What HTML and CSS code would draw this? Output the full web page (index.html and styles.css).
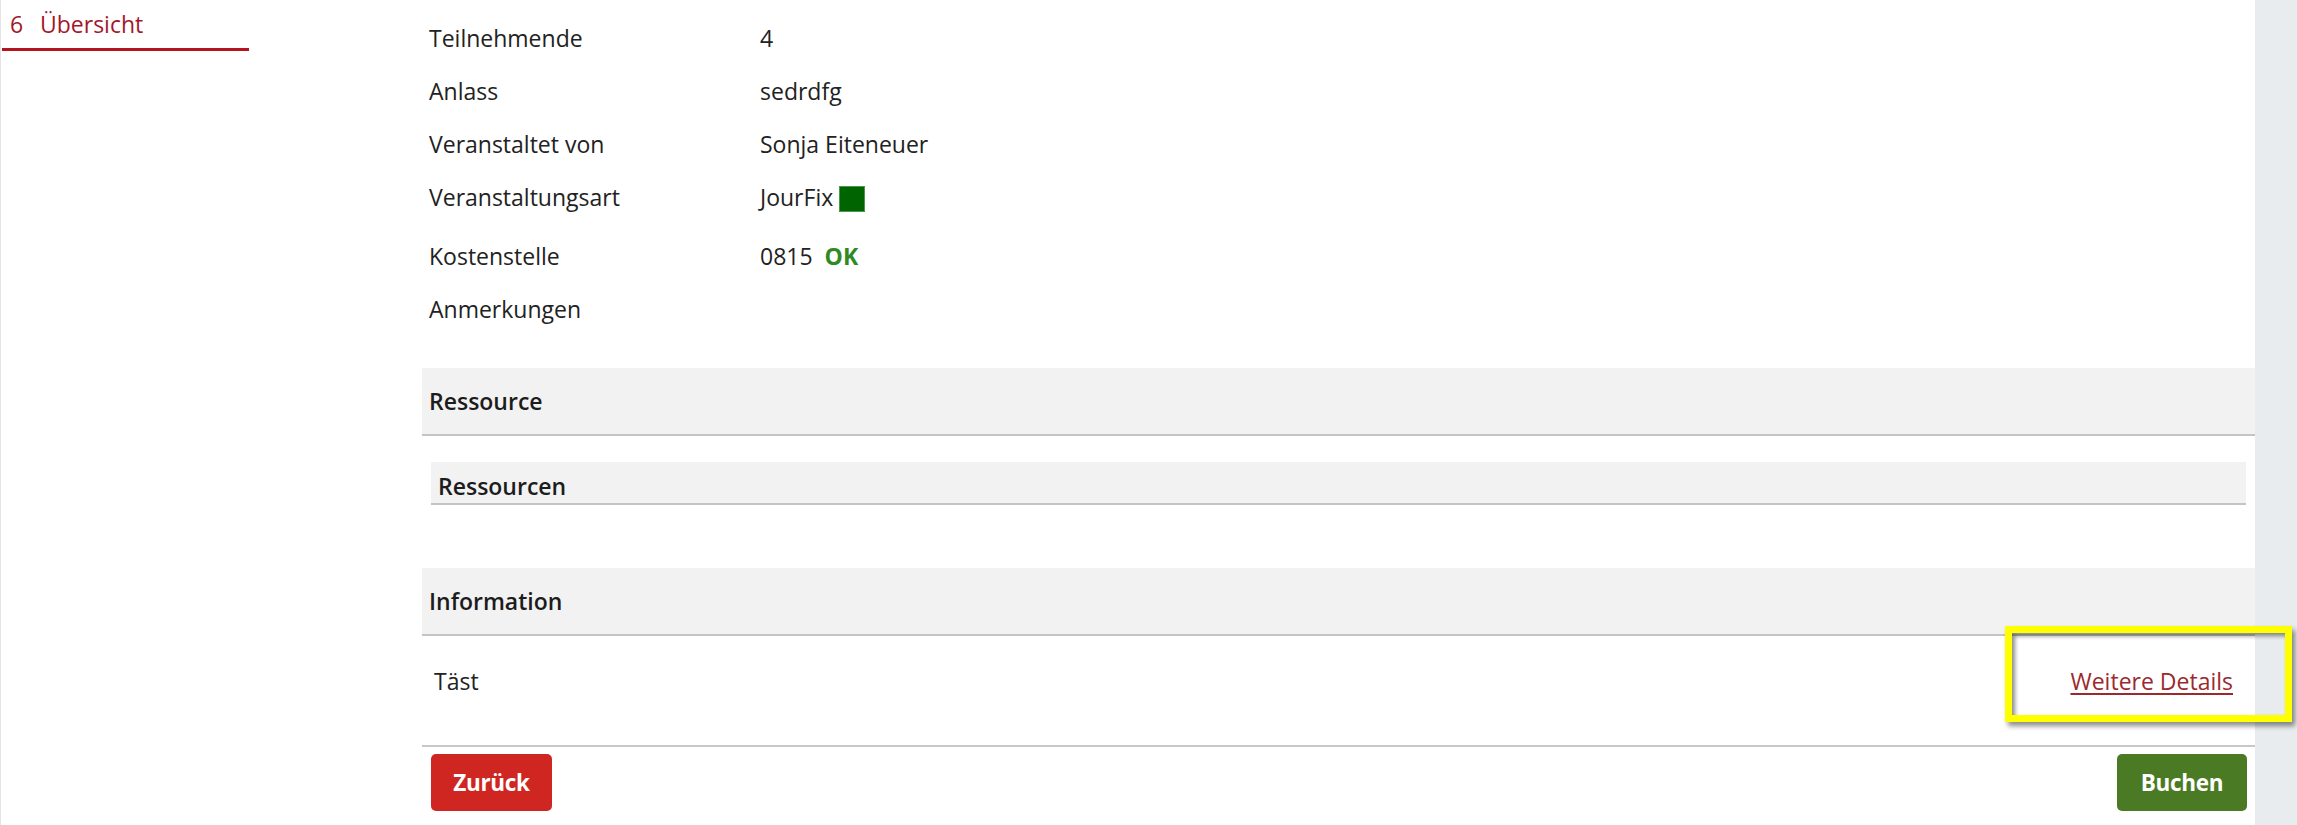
FILE: index.html
```html
<!DOCTYPE html>
<html lang="de">
<head>
<meta charset="utf-8">
<title>Übersicht</title>
<link rel="stylesheet" href="styles.css">
</head>
<body>
<div class="page">
  <aside class="sidebar">
    <div class="nav-item"><span class="nav-num">6</span><span class="nav-label">Übersicht</span></div>
  </aside>
  <main class="main">
    <div class="details">
      <div class="row"><div class="label">Teilnehmende</div><div class="value">4</div></div>
      <div class="row"><div class="label">Anlass</div><div class="value">sedrdfg</div></div>
      <div class="row"><div class="label">Veranstaltet von</div><div class="value">Sonja Eiteneuer</div></div>
      <div class="row row-tall"><div class="label">Veranstaltungsart</div><div class="value">JourFix <span class="swatch"></span></div></div>
      <div class="row"><div class="label">Kostenstelle</div><div class="value">0815 <span class="ok">OK</span></div></div>
      <div class="row"><div class="label">Anmerkungen</div><div class="value"></div></div>
    </div>

    <div class="section-head first">Ressource</div>
    <div class="sub-head">Ressourcen</div>

    <div class="section-head info">Information</div>
    <div class="info-row">
      <span class="info-text">Täst</span>
      <a class="more-link" href="#">Weitere Details</a>
    </div>

    <div class="actions">
      <button class="btn btn-back" type="button">Zurück</button>
      <button class="btn btn-book" type="button">Buchen</button>
    </div>
  </main>
  <div class="scroll-strip"></div>
  <div class="highlight"></div>
</div>
</body>
</html>
```

FILE: styles.css
```css
* { box-sizing: border-box; }

html, body {
  margin: 0;
  padding: 0;
  background: #ffffff;
}

body {
  font-family: "Open Sans", "Noto Sans", "DejaVu Sans", sans-serif;
  font-size: 23px;
  color: #222222;
}

.page {
  position: relative;
  display: flex;
  width: 2297px;
  height: 825px;
  overflow: hidden;
}

.sidebar {
  width: 422px;
  flex: 0 0 422px;
  border-left: 1px solid #e4e4e4;
}

.nav-item {
  width: 247px;
  margin-left: 1px;
  height: 51px;
  padding-top: 7px;
  border-bottom: 3px solid #b3141d;
  color: #a3172a;
  line-height: 34px;
  font-size: 23px;
}

.nav-num {
  display: inline-block;
  margin-left: 8px;
  width: 30px;
}

.main {
  flex: 1 1 auto;
  min-width: 0;
  padding-top: 12px;
}

.scroll-strip {
  flex: 0 0 42px;
  background: #e8ecef;
}

.details {
  padding-left: 7px;
}

.row {
  display: flex;
  height: 53px;
  padding-top: 12px;
  line-height: 29px;
}

.row-tall {
  height: 59px;
}

.label {
  width: 331px;
  flex: 0 0 331px;
}

.value {
  flex: 1 1 auto;
}

.swatch {
  display: inline-block;
  width: 26px;
  height: 26px;
  margin-left: 0;
  background: #006400;
  border: 1px solid #4a964a;
  vertical-align: -6px;
}

.ok {
  margin-left: 6px;
  color: #2f8a24;
  font-weight: 700;
}

.section-head {
  height: 68px;
  padding-left: 7px;
  display: flex;
  align-items: center;
  background: #f2f2f2;
  border-bottom: 2px solid #c4c4c4;
  font-weight: 600;
  color: #1c1c1c;
}

.section-head.first {
  margin-top: 32px;
}

.sub-head {
  margin: 26px 9px 0 9px;
  height: 43px;
  padding: 10px 0 0 7px;
  line-height: 28px;
  background: #f2f2f2;
  border-bottom: 2px solid #c4c4c4;
  font-weight: 600;
  color: #1c1c1c;
}

.section-head.info {
  margin-top: 63px;
}

.info-row {
  display: flex;
  justify-content: space-between;
  height: 111px;
  padding: 31px 22px 0 12px;
  line-height: 29px;
  border-bottom: 2px solid #c8c8c8;
}

.more-link {
  color: #9b2a2e;
  text-decoration: underline;
  text-underline-offset: 3px;
}

.actions {
  display: flex;
  justify-content: space-between;
  padding: 7px 8px 0 9px;
}

.btn {
  height: 57px;
  border: none;
  border-radius: 5px;
  color: #ffffff;
  font-family: "Open Sans", "Noto Sans", sans-serif;
  font-size: 22.5px;
  font-weight: 700;
  letter-spacing: -0.3px;
  cursor: pointer;
}

.btn-back {
  width: 121px;
  background: #cf2621;
}

.btn-book {
  width: 130px;
  background: #4a7b24;
}

.highlight {
  position: absolute;
  left: 2005px;
  top: 626px;
  width: 287px;
  height: 96px;
  border: 7px solid #ffff00;
  box-shadow: 3px 4px 5px rgba(0, 0, 0, 0.45), inset 3px 3px 4px rgba(0, 0, 0, 0.45);
  pointer-events: none;
}
```
